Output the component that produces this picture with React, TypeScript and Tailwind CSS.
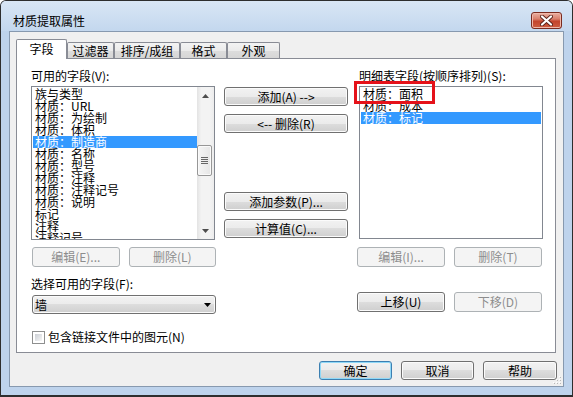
import React from "react";

const FONT = "font-['Noto_Sans_CJK_SC','Noto_Sans',sans-serif]";

type BtnProps = {
  label: string;
  className: string;
  disabled?: boolean;
  focused?: boolean;
};

function Btn({ label, className, disabled, focused }: BtnProps) {
  let cls =
    "flex items-center justify-center rounded-[3px] border text-[12px] leading-[14px] whitespace-nowrap ";
  if (disabled) {
    cls += "border-[#adb2b5] bg-[#f4f4f4] text-[#8d8d8d]";
  } else if (focused) {
    cls +=
      "border-[#3c7fb1] text-black shadow-[inset_0_0_0_1px_#8fd8f7] bg-[linear-gradient(to_bottom,#f2f2f2_0%,#ebebeb_50%,#dddddd_50%,#cfcfcf_100%)]";
  } else {
    cls +=
      "border-[#707070] text-black shadow-[inset_0_0_0_1px_#fbfbfb] bg-[linear-gradient(to_bottom,#f2f2f2_0%,#ebebeb_50%,#dddddd_50%,#cfcfcf_100%)]";
  }
  return <div className={cls + " " + className}>{label}</div>;
}

const leftItems = [
  "族与类型",
  "材质：URL",
  "材质：为绘制",
  "材质：体积",
  "材质：制造商",
  "材质：名称",
  "材质：型号",
  "材质：注释",
  "材质：注释记号",
  "材质：说明",
  "标记",
  "注释",
  "注释记号",
];

const rightItems = ["材质：面积", "材质：成本", "材质：标记"];

function Item({ text, selected }: { text: string; selected?: boolean }) {
  return (
    <div
      className={
        "h-[12px] leading-[12px] text-[12px] pl-[2px] whitespace-nowrap " +
        (selected ? "bg-[#3399ff] text-white" : "text-black")
      }
    >
      {text}
    </div>
  );
}

function ScrollBar() {
  return (
    <div className="w-[17px] flex flex-col bg-[linear-gradient(to_right,#e3e3e3,#f3f3f3_25%,#f3f3f3_75%,#ececec)]">
      <div className="h-[17px] flex items-center justify-center">
        <svg width="7" height="4" viewBox="0 0 7 4">
          <path d="M3.5 0 L7 4 L0 4 Z" fill="#4d4d4d" />
        </svg>
      </div>
      <div className="mt-[41px] ml-[0px] w-[15px] h-[31px] rounded-[2px] border border-[#979797] bg-[linear-gradient(to_right,#f5f5f5,#e6e6e6)] shadow-[inset_0_0_0_1px_#fafafa] flex flex-col items-center justify-center gap-[1px]">
        <div className="w-[7px] h-[1px] bg-[#666]" />
        <div className="w-[7px] h-[1px] bg-[#666]" />
        <div className="w-[7px] h-[1px] bg-[#666]" />
        <div className="w-[7px] h-[1px] bg-[#666]" />
      </div>
      <div className="flex-1" />
      <div className="h-[17px] flex items-center justify-center">
        <svg width="7" height="4" viewBox="0 0 7 4">
          <path d="M0 0 L7 0 L3.5 4 Z" fill="#4d4d4d" />
        </svg>
      </div>
    </div>
  );
}

function Tab({
  label,
  active,
  className,
}: {
  label: string;
  active?: boolean;
  className: string;
}) {
  if (active) {
    return (
      <div
        className={
          "relative z-10 -mb-px h-[20px] border border-b-0 border-[#898c95] bg-white text-[12px] leading-[14px] text-black flex justify-center pt-[2px] rounded-t-[2px] " +
          className
        }
      >
        {label}
      </div>
    );
  }
  return (
    <div
      className={
        "h-[16px] border border-b-0 border-[#898c95] text-[12px] leading-[14px] text-black flex justify-center pt-[1px] rounded-t-[2px] bg-[linear-gradient(to_bottom,#f3f3f3_0%,#ebebeb_50%,#dddddd_51%,#d6d6d6_100%)] " +
        className
      }
    >
      {label}
    </div>
  );
}

export default function App() {
  return (
    <div className={"w-[573px] h-[397px] bg-white " + FONT}>
      <div className="w-[573px] h-[397px] rounded-t-[6px] border border-b-2 border-[#2e2e2e] bg-[#bed3ec] flex flex-col">
        {/* Title bar */}
        <div className="h-[30px] flex justify-between items-start pl-[12px] pr-[10px] rounded-t-[5px] bg-[linear-gradient(to_bottom,#d9e6f5,#c3d7ee)]">
          <div className="pt-[13px] text-[12px] leading-[14px] text-black">
            材质提取属性
          </div>
          <div className="mt-[11px] w-[31px] h-[17px] rounded-[3px] border border-[#7a2b1f] bg-[linear-gradient(to_bottom,#eab0a2_0%,#d9806c_40%,#c4442c_55%,#cd5d41_100%)] flex items-center justify-center shadow-[inset_0_0_0_1px_#f0b8aa]">
            <svg width="13" height="11" viewBox="0 0 13 11">
              <path
                d="M2 1.5 L11 9.5 M11 1.5 L2 9.5"
                stroke="#5a2219"
                strokeWidth="4"
                strokeLinecap="round"
              />
              <path
                d="M2 1.5 L11 9.5 M11 1.5 L2 9.5"
                stroke="#ffffff"
                strokeWidth="2.2"
                strokeLinecap="round"
              />
            </svg>
          </div>
        </div>

        {/* Client area */}
        <div className="px-[8px]">
          <div className="relative w-[555px] h-[356px] border border-[#8799af] bg-[#f0f0f0] pt-[7px] pl-[6px] pr-[7px]">
            {/* Tabs */}
            <div className="flex items-end h-[19px]">
              <Tab label="字段" active className="w-[51px]" />
              <Tab label="过滤器" className="w-[47px]" />
              <Tab label="排序/成组" className="w-[66px]" />
              <Tab label="格式" className="w-[47px]" />
              <Tab label="外观" className="w-[53px]" />
            </div>

            {/* Panel */}
            <div className="w-[540px] h-[295px] border border-[#898c95] bg-white flex pl-[14px]">
              {/* Left column */}
              <div className="w-[185px] flex flex-col pt-[10px]">
                <div className="h-[14px] leading-[14px] text-[12px] text-black">
                  可用的字段(V):
                </div>
                <div className="mt-[3px] w-[184px] h-[154px] border border-[#828790] bg-white flex">
                  <div className="flex-1 overflow-hidden pt-[1px] pl-[1px]">
                    {leftItems.map((t, i) => (
                      <Item key={i} text={t} selected={i === 4} />
                    ))}
                  </div>
                  <ScrollBar />
                </div>
                <div className="mt-[7px] flex gap-[9px] pl-[1px]">
                  <Btn label="编辑(E)..." disabled className="w-[88px] h-[20px]" />
                  <Btn label="删除(L)" disabled className="w-[88px] h-[20px]" />
                </div>
                <div className="mt-[10px] h-[14px] leading-[14px] text-[12px] text-black">
                  选择可用的字段(F):
                </div>
                <div className="mt-[4px] ml-[1px] w-[184px] h-[19px] rounded-[3px] border border-[#707070] shadow-[inset_0_0_0_1px_#fbfbfb] bg-[linear-gradient(to_bottom,#f2f2f2_0%,#ebebeb_50%,#dddddd_50%,#cfcfcf_100%)] flex items-center justify-between pl-[2px] pr-[4px]">
                  <span className="text-[12px] leading-[14px] text-black">墙</span>
                  <svg width="7" height="4" viewBox="0 0 7 4">
                    <path d="M0 0 L7 0 L3.5 4 Z" fill="#000" />
                  </svg>
                </div>
                <div className="mt-[16px] ml-[1px] flex items-center">
                  <div className="w-[13px] h-[13px] border border-[#8e8f8f] bg-white p-[2px]">
                    <div className="w-full h-full bg-[linear-gradient(135deg,#cbcfd5,#f6f6f6)]" />
                  </div>
                  <span className="ml-[3px] text-[12px] leading-[14px] text-black">
                    包含链接文件中的图元(N)
                  </span>
                </div>
              </div>

              {/* Middle column */}
              <div className="ml-[8px] w-[124px] flex flex-col pt-[28px]">
                <Btn label="添加(A) -->" className="w-[124px] h-[19px]" />
                <Btn label="<-- 删除(R)" className="mt-[8px] w-[124px] h-[19px]" />
                <Btn label="添加参数(P)..." className="mt-[59px] w-[124px] h-[19px]" />
                <Btn label="计算值(C)..." className="mt-[8px] w-[124px] h-[19px]" />
              </div>

              {/* Right column */}
              <div className="ml-[9px] w-[185px] flex flex-col pt-[10px]">
                <div className="ml-[2px] h-[14px] leading-[14px] text-[12px] text-black whitespace-nowrap">
                  明细表字段(按顺序排列)(S):
                </div>
                <div className="relative mt-[3px] ml-[2px] w-[184px] h-[153px]">
                  <div className="w-full h-full border border-[#828790] bg-white pt-[1px] px-[1px]">
                    {rightItems.map((t, i) => (
                      <Item key={i} text={t} selected={i === 2} />
                    ))}
                  </div>
                  <div className="absolute left-[-5px] top-[-5px] w-[81px] h-[23px] border-[3px] border-[#e5121a]" />
                </div>
                <div className="mt-[8px] flex gap-[9px]">
                  <Btn label="编辑(I)..." disabled className="w-[88px] h-[20px]" />
                  <Btn label="删除(T)" disabled className="w-[88px] h-[20px]" />
                </div>
                <div className="mt-[25px] flex gap-[9px]">
                  <Btn label="上移(U)" className="w-[88px] h-[20px]" />
                  <Btn label="下移(D)" disabled className="w-[88px] h-[20px]" />
                </div>
              </div>
            </div>

            {/* Dialog buttons */}
            <div className="mt-[8px] flex justify-end gap-[9px] pr-[0px] mr-[-1px]">
              <Btn label="确定" focused className="w-[73px] h-[19px]" />
              <Btn label="取消" className="w-[73px] h-[19px]" />
              <Btn label="帮助" className="w-[74px] h-[19px]" />
            </div>

            {/* size grip */}
            <svg
              className="absolute right-[1px] bottom-[1px]"
              width="10"
              height="10"
              viewBox="0 0 10 10"
            >
              {[
                [8, 2],
                [8, 5],
                [5, 5],
                [8, 8],
                [5, 8],
                [2, 8],
              ].map(([x, y], i) => (
                <g key={i}>
                  <rect x={x} y={y} width="1" height="1" fill="#b8b8b8" />
                  <rect x={x - 1} y={y - 1} width="1" height="1" fill="#ffffff" />
                </g>
              ))}
            </svg>
          </div>
        </div>
      </div>
    </div>
  );
}
